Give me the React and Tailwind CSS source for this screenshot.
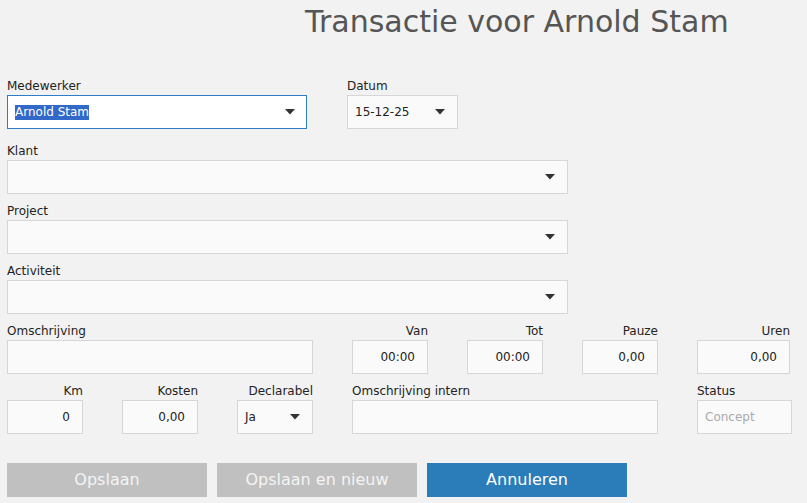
import React from "react";

const font = { fontFamily: '"DejaVu Sans", Verdana, sans-serif' };

function Arrow() {
  return (
    <svg width="10" height="6" viewBox="0 0 10 6" className="shrink-0">
      <path d="M0 0 H10 L5 5.5 Z" fill="#333" />
    </svg>
  );
}

function Label({ children, right }) {
  return (
    <div className={`h-[15px] text-[12px] leading-[13px] text-[#222] whitespace-nowrap ${right ? "text-right" : ""}`}>{children}</div>
  );
}

function Box({ w, children, className = "" }) {
  return (
    <div
      className={`h-[34px] border border-[#d6d6d6] bg-[#fafafa] flex items-center text-[12px] text-[#222] ${className}`}
      style={{ width: w }}
    >
      {children}
    </div>
  );
}

function Select({ w, value }) {
  return (
    <Box w={w} className="pl-[7px] pr-[12px] justify-between">
      <span>{value}</span>
      <Arrow />
    </Box>
  );
}

function Num({ w, value }) {
  return (
    <Box w={w} className="justify-end pr-[12px]">
      <span>{value}</span>
    </Box>
  );
}

export default function App() {
  return (
    <div className="w-[807px] h-[503px] bg-[#f2f2f2] overflow-hidden" style={font}>
      <div className="h-[70px] pl-[305px] pt-[3px] text-[30px] leading-[38px] text-[#555] whitespace-nowrap">
        Transactie voor Arnold Stam
      </div>
      <div className="pl-[7px] mt-[10px]">
        <div className="flex gap-[40px]">
          <div className="w-[300px]">
            <Label>Medewerker</Label>
            <div className="h-[34px] w-[300px] border border-[#2f7dc8] bg-white flex items-center justify-between pl-[7px] pr-[11px] text-[12px]">
              <span className="bg-[#3268c8] text-white leading-[15px]">Arnold Stam</span>
              <Arrow />
            </div>
          </div>
          <div>
            <Label>Datum</Label>
            <Select w="111px" value="15-12-25" />
          </div>
        </div>
        <div className="mt-[16px]">
          <Label>Klant</Label>
          <Select w="561px" value="" />
        </div>
        <div className="mt-[11px]">
          <Label>Project</Label>
          <Select w="561px" value="" />
        </div>
        <div className="mt-[11px]">
          <Label>Activiteit</Label>
          <Select w="561px" value="" />
        </div>
        <div className="mt-[11px] flex">
          <div className="w-[306px]">
            <Label>Omschrijving</Label>
            <Box w="306px" />
          </div>
          <div className="ml-[39px] w-[76px]">
            <Label right>Van</Label>
            <Num w="76px" value="00:00" />
          </div>
          <div className="ml-[39px] w-[76px]">
            <Label right>Tot</Label>
            <Num w="76px" value="00:00" />
          </div>
          <div className="ml-[39px] w-[76px]">
            <Label right>Pauze</Label>
            <Num w="76px" value="0,00" />
          </div>
          <div className="ml-[39px] w-[93px]">
            <Label right>Uren</Label>
            <Num w="93px" value="0,00" />
          </div>
        </div>
        <div className="mt-[11px] flex">
          <div className="w-[76px]">
            <Label right>Km</Label>
            <Num w="76px" value="0" />
          </div>
          <div className="ml-[39px] w-[76px]">
            <Label right>Kosten</Label>
            <Num w="76px" value="0,00" />
          </div>
          <div className="ml-[39px] w-[76px]">
            <Label right>Declarabel</Label>
            <Select w="76px" value="Ja" />
          </div>
          <div className="ml-[39px] w-[306px]">
            <Label>Omschrijving intern</Label>
            <Box w="306px" />
          </div>
          <div className="ml-[39px] w-[95px]">
            <Label>Status</Label>
            <Box w="95px" className="pl-[7px] text-[#aaa]">
              <span>Concept</span>
            </Box>
          </div>
        </div>
        <div className="mt-[29px] flex gap-[10px]">
          <button className="w-[200px] h-[34px] bg-[#c0c0c0] text-[#f4f4f4] text-[16px]">Opslaan</button>
          <button className="w-[200px] h-[34px] bg-[#c0c0c0] text-[#f4f4f4] text-[16px]">Opslaan en nieuw</button>
          <button className="w-[200px] h-[34px] bg-[#2a7db9] text-white text-[16px]">Annuleren</button>
        </div>
      </div>
    </div>
  );
}
